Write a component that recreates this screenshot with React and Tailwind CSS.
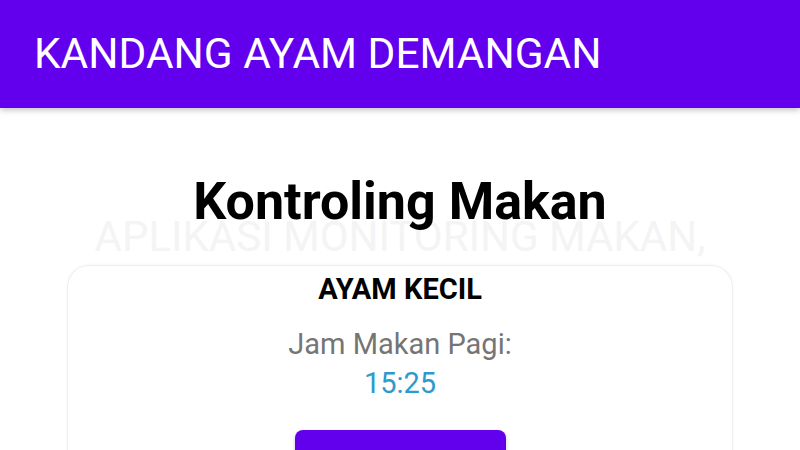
export default function App() {
  return (
    <div className="w-[800px] h-[450px] overflow-hidden bg-white font-['Roboto',sans-serif]">
      <header className="h-[108px] bg-[#6200ee] flex items-center pl-[34px] shadow-[0_2px_6px_rgba(0,0,0,0.25)] relative z-10">
        <h1 className="text-white text-[42.4px] leading-none">KANDANG AYAM DEMANGAN</h1>
      </header>
      <main className="flex flex-col items-center pt-[74px]">
        <h2 className="relative z-10 text-black font-bold text-[52px] leading-[40px]">Kontroling Makan</h2>
        <p className="text-[#f4f4f4] text-[42px] leading-[30px] whitespace-nowrap">APLIKASI MONITORING MAKAN,</p>
        <div className="w-[666px] mt-[13px] rounded-t-[22px] border-t border-x border-[#eeeeee] shadow-[0_-1px_3px_rgba(0,0,0,0.03)] flex flex-col items-center pt-[6px]">
          <h3 className="font-bold text-[29px] leading-[34px] text-black">AYAM KECIL</h3>
          <p className="mt-[21px] text-[#757575] text-[29px] leading-[34px]">Jam Makan Pagi:</p>
          <p className="mt-[5px] text-[#2e9acc] text-[29px] leading-[34px]">15:25</p>
          <button className="mt-[30px] w-[211px] h-[60px] bg-[#6200ee] rounded-[8px] shadow-[0_2px_4px_rgba(0,0,0,0.2)]"></button>
        </div>
      </main>
    </div>
  );
}
